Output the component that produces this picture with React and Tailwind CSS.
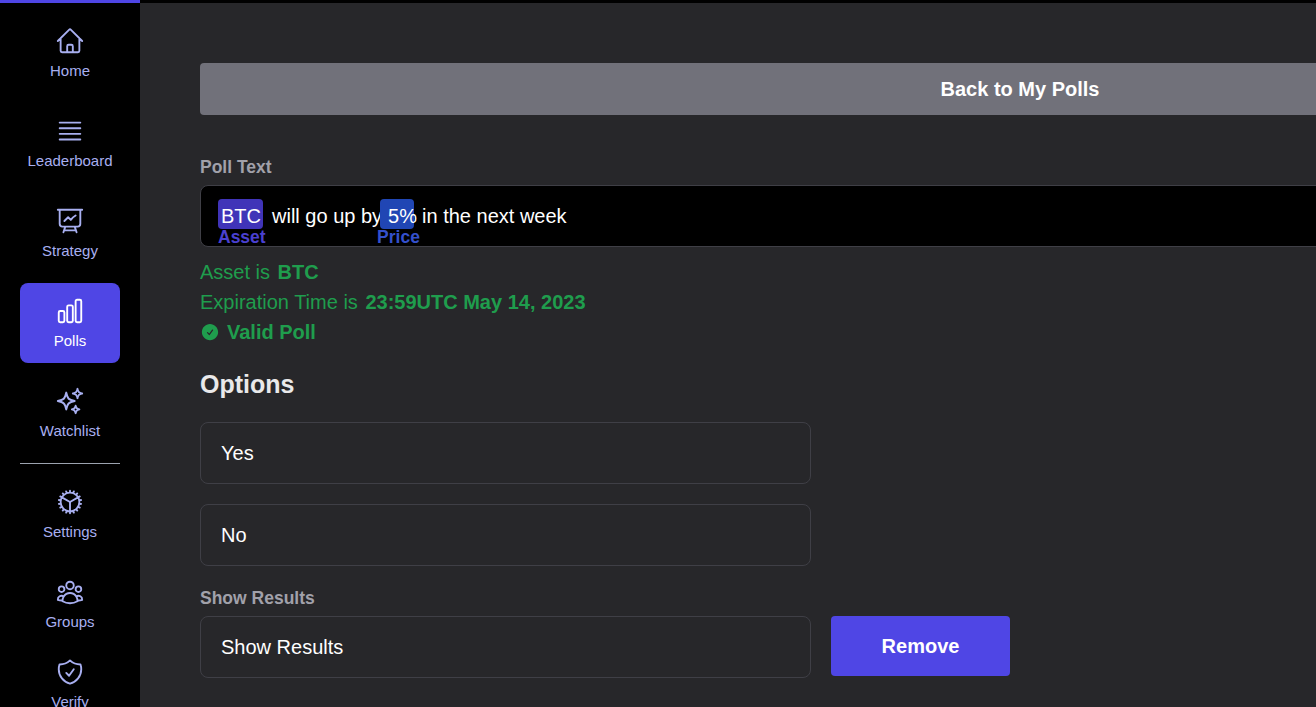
import {
  HiOutlineHome,
  HiOutlineBars4,
  HiOutlinePresentationChartLine,
  HiOutlineChartBar,
  HiOutlineSparkles,
  HiOutlineCog,
  HiOutlineUserGroup,
  HiOutlineShieldCheck,
  HiCheckCircle,
} from 'react-icons/hi2';

const TOP = [
  ['Home', HiOutlineHome],
  ['Leaderboard', HiOutlineBars4],
  ['Strategy', HiOutlinePresentationChartLine],
  ['Polls', HiOutlineChartBar, true],
  ['Watchlist', HiOutlineSparkles],
];

function NavItem({ label, icon: Icon, active, iconClass }) {
  return (
    <div className={`w-[100px] h-[80px] shrink-0 rounded-lg flex flex-col items-center pt-[13px] gap-[5px] text-[15px] ${active ? 'bg-[#4f46e5] text-white' : 'text-[#a8aff0]'}`}>
      <Icon size={30} className={iconClass} />
      <span className="leading-5">{label}</span>
    </div>
  );
}

export default function App() {
  return (
    <div className="h-[707px] overflow-hidden bg-[#27272a] font-['Liberation_Sans',Arial,sans-serif] flex flex-col">
      <div className="h-[3px] shrink-0 bg-black">
        <div className="w-[140px] h-full bg-[#4f46e5]" />
      </div>
      <div className="flex flex-1 min-h-0">
        <nav className="w-[140px] shrink-0 bg-black flex flex-col items-center pt-[10px] gap-[10px]">
          {TOP.map(([label, icon, active]) => <NavItem key={label} label={label} icon={icon} active={active} />)}
          <div className="w-[100px] h-px shrink-0 bg-[#9ca3af]" />
          <NavItem label="Settings" icon={HiOutlineCog} iconClass="rotate-90" />
          <div className="flex flex-col">
            <NavItem label="Groups" icon={HiOutlineUserGroup} />
            <NavItem label="Verify" icon={HiOutlineShieldCheck} />
          </div>
        </nav>

        <main className="flex-1 min-w-0 pl-[60px] pt-[60px]">
          <div className="w-[1640px]">
            <button className="w-full h-[52px] rounded bg-[#71717a] text-white font-bold text-xl">Back to My Polls</button>

            <label className="block mt-[40px] text-[#a1a1aa] font-bold text-[17.5px] leading-6">Poll Text</label>
            <div className="mt-[6px] h-[62px] rounded-lg border border-[#3f3f46] bg-black relative pl-[17px] pt-[13px] text-white text-xl leading-[34px] flex items-start">
              <div className="relative">
                <span className="block bg-[#4034b8] rounded-sm px-[3px] h-[30px] w-[45px]">BTC</span>
                <span className="absolute left-0 top-[26px] text-[#4a40d0] text-[17.5px] font-bold leading-6">Asset</span>
              </div>
              <span className="ml-[9px]">will go up by</span>
              <div className="relative -ml-[2px]">
                <span className="block bg-[#2046b4] rounded-sm px-2 h-[30px] w-[34px] whitespace-nowrap">5%</span>
                <span className="absolute -left-[3px] top-[26px] text-[#3450cc] text-[17.5px] font-bold leading-6">Price</span>
              </div>
              <span className="ml-[8px]">in the next week</span>
            </div>

            <div className="mt-[10px] text-[#1f9d4d] text-xl leading-[30px]">
              <div>Asset is <b className="ml-[2px]">BTC</b></div>
              <div>Expiration Time is <b className="ml-[2px]">23:59UTC May 14, 2023</b></div>
              <div className="flex items-center gap-[7px] font-bold"><HiCheckCircle size={20} /> Valid Poll</div>
            </div>

            <h2 className="mt-[21px] text-white/90 font-bold text-[25px] leading-8">Options</h2>

            <div className="mt-[22px] w-[611px] flex flex-col gap-5">
              <div className="h-[62px] rounded-lg border border-[#3f3f46] flex items-center px-5 text-white text-xl">Yes</div>
              <div className="h-[62px] rounded-lg border border-[#3f3f46] flex items-center px-5 text-white text-xl">No</div>
            </div>

            <label className="block mt-5 text-[#a1a1aa] font-bold text-[17.5px] leading-6">Show Results</label>
            <div className="mt-[6px] flex items-start gap-5">
              <div className="w-[611px] h-[62px] rounded-lg border border-[#3f3f46] flex items-center px-5 text-white text-xl">Show Results</div>
              <button className="w-[179px] h-[60px] rounded bg-[#4f46e5] text-white font-bold text-xl">Remove</button>
            </div>
          </div>
        </main>
      </div>
    </div>
  );
}
